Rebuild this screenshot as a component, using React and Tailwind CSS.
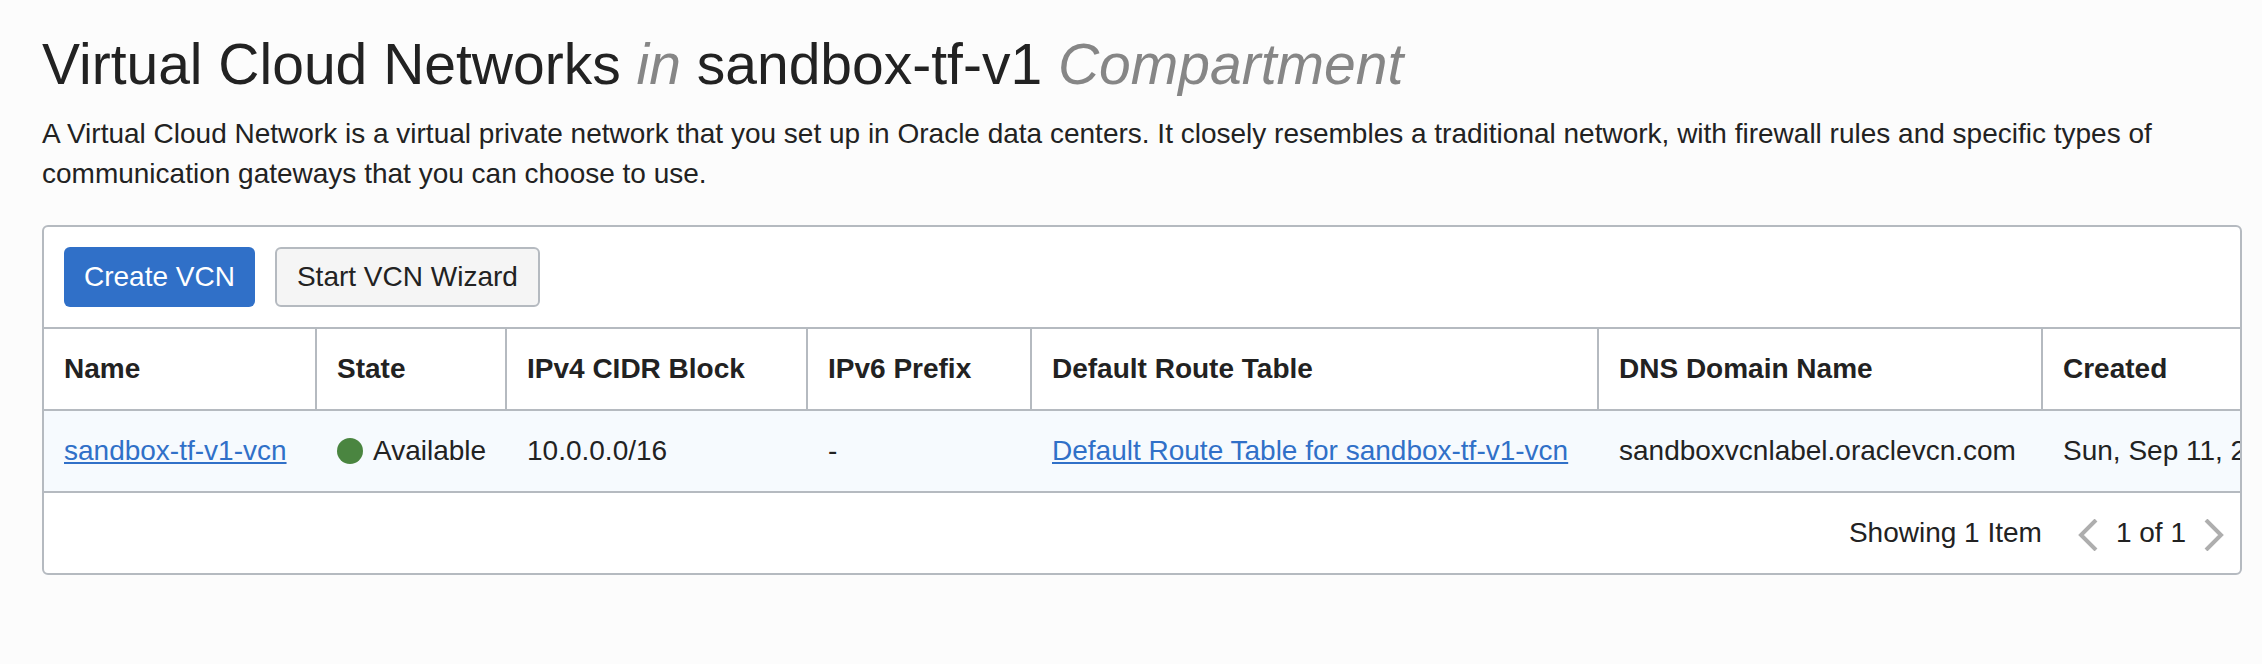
const columns = [
  { label: "Name", width: "w-[273px]" },
  { label: "State", width: "w-[190px]" },
  { label: "IPv4 CIDR Block", width: "w-[301px]" },
  { label: "IPv6 Prefix", width: "w-[224px]" },
  { label: "Default Route Table", width: "w-[567px]" },
  { label: "DNS Domain Name", width: "w-[444px]" },
  { label: "Created", width: "w-[460px]" },
];

const linkClass = "text-[#3070c8] underline decoration-2 underline-offset-2";

function Chevron({ points }) {
  return (
    <svg viewBox="0 0 20 32" className="h-8 w-5" fill="none" stroke="#aeaeae" strokeWidth="4" aria-hidden="true">
      <polyline points={points} />
    </svg>
  );
}

export default function App() {
  return (
    <main className="min-h-screen bg-[#fcfcfc] py-8 pr-5 pl-[42px] font-['Liberation_Sans',Arial,sans-serif] text-[28px] leading-10 text-[#222]">
      <h1 className="text-[57px] leading-16">
        Virtual Cloud Networks <em className="text-[#868686]">in</em> sandbox-tf-v1{" "}
        <em className="text-[#868686]">Compartment</em>
      </h1>
      <p className="mt-[18px]">
        A Virtual Cloud Network is a virtual private network that you set up in Oracle data centers. It closely
        resembles a traditional network, with firewall rules and specific types of communication gateways that you can
        choose to use.
      </p>

      <section className="mt-[31px] overflow-hidden rounded-md border-2 border-[#b5bac0] bg-white" aria-label="Virtual Cloud Networks">
        <div className="flex gap-5 p-5">
          <button type="button" className="h-[60px] rounded-md bg-[#3070c8] px-5 text-white">
            Create VCN
          </button>
          <button type="button" className="h-[60px] rounded-md border-2 border-[#b5bac0] bg-[#f5f5f5] px-5">
            Start VCN Wizard
          </button>
        </div>

        <div className="overflow-hidden">
          <table className="w-[2459px] table-fixed border-separate border-spacing-0 text-left whitespace-nowrap">
            <thead>
              <tr>
                {columns.map((column) => (
                  <th
                    key={column.label}
                    scope="col"
                    className={`${column.width} h-[84px] border-y-2 border-r-2 border-[#b5bac0] px-5 font-bold`}
                  >
                    {column.label}
                  </th>
                ))}
              </tr>
            </thead>
            <tbody>
              <tr className="h-[82px] bg-[#f6fafe] *:border-b-2 *:border-[#b5bac0] *:px-5">
                <td>
                  <a href="#vcn" className={linkClass}>sandbox-tf-v1-vcn</a>
                </td>
                <td>
                  <span className="flex items-center gap-2.5">
                    <span className="size-[26px] shrink-0 rounded-full bg-[#4a8540]" />
                    Available
                  </span>
                </td>
                <td>10.0.0.0/16</td>
                <td>-</td>
                <td>
                  <a href="#route-table" className={linkClass}>Default Route Table for sandbox-tf-v1-vcn</a>
                </td>
                <td>sandboxvcnlabel.oraclevcn.com</td>
                <td>Sun, Sep 11, 2022</td>
              </tr>
            </tbody>
          </table>
        </div>

        <div className="flex h-20 items-center justify-end pr-4">
          <span>Showing 1 Item</span>
          <nav className="ml-9 flex items-center gap-[18px]" aria-label="Pagination">
            <button type="button" aria-label="Previous page" className="pt-1">
              <Chevron points="18,1 3,16 18,31" />
            </button>
            <span>1 of 1</span>
            <button type="button" aria-label="Next page" className="pt-1">
              <Chevron points="2,1 17,16 2,31" />
            </button>
          </nav>
        </div>
      </section>
    </main>
  );
}
